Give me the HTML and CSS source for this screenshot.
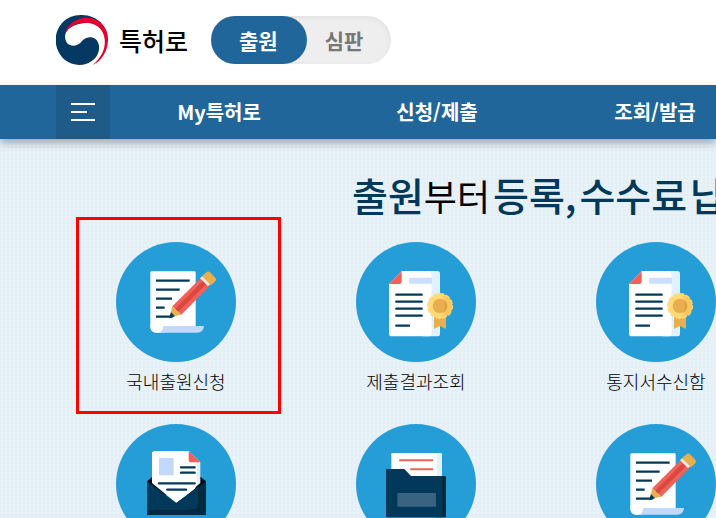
FILE: index.html
```html
<!DOCTYPE html>
<html lang="ko">
<head>
<meta charset="utf-8">
<meta name="viewport" content="width=device-width, initial-scale=1">
<title>특허로</title>
<link rel="stylesheet" href="styles.css">
</head>
<body>

<!-- shared drawings for the service icons -->
<svg class="defs" aria-hidden="true">
  <symbol id="icon-apply" viewBox="0 0 360 360">
    <path fill="#fff" d="M107 88h128q4 0 4 4v162h-70l-32 18h-14q-20 0-20-20V92q0-4 4-4z"/>
    <path fill="#c2d9fb" d="M137 252h127q-2 20-20 20H123q16-4 14-20z"/>
    <path fill="#fff" d="M103 245h39v7q-1 20-20 20t-19-20z"/>
    <path stroke="#023859" stroke-width="7" d="M120 116h101M120 143h71M120 170h48M120 197h26M120 224h50"/>
    <path fill="#f0615a" d="M169 193l86-86 26 25-85 86z"/>
    <path fill="#d8483f" d="M177 201l86-86 10 9-87 86z"/>
    <path fill="#e9af4e" d="M169 193l-8 32 35-7z"/>
    <path fill="#023859" d="M165 211l-6 18 18-6z"/>
    <path fill="#e8e8e8" d="M252 109l8-8 24 24-8 8z"/>
    <path fill="#e9af4e" d="M258 103l13-12q5-5 11 0l16 16q5 5 0 11l-13 12z"/>
  </symbol>
  <symbol id="icon-result" viewBox="0 0 360 360">
    <path fill="#def3ff" d="M200 87h44q8 0 8 8v180q0 8-8 8h-44z"/>
    <path fill="#fff" d="M137 87h80q10 1 10 11v174q0 11-10 11H107q-8 0-8-8V126z"/>
    <path fill="#f0615a" d="M137 87v31q0 8-7 8H99z"/>
    <path fill="#cbe0ff" d="M159 107h69v18h-69z"/>
    <path stroke="#023859" stroke-width="7" stroke-linecap="round" d="M121 158h76M121 179h76M121 200h76M121 221h76M121 251h38"/>
    <path fill="#e9af4e" d="M234 224h36v37l-18-9-18 9z"/>
    <circle cx="252" cy="192" r="35" fill="#ffda76"/>
    <circle cx="252" cy="192" r="35" fill="none" stroke="#ffda76" stroke-width="8" stroke-linecap="round" stroke-dasharray="9 9.32"/>
    <path fill="#fdc85b" d="M261 158q29 8 27 35t-32 33q20-29 5-68z"/>
    <circle cx="252" cy="192" r="22" fill="#e9af4e"/>
    <path fill="#dda142" d="M262 173q12 8 12 19t-12 20q10-19 0-39z"/>
  </symbol>
  <symbol id="icon-mail" viewBox="0 0 360 360">
    <path fill="#000d18" d="M93 172l16-14h144l17 14-30 40H110z"/>
    <path fill="#def3ff" d="M218 81l35 34v62l-70 60z"/>
    <path fill="#fff" d="M116 81h102l25 34v60q0 15-12 24l-50 38-73-60V89q0-8 8-8z"/>
    <path fill="#f0615a" d="M218 81l35 34h-27q-8 0-8-8z"/>
    <rect x="129" y="102" width="44" height="52" rx="3" fill="#c2d9fb"/>
    <path stroke="#023859" stroke-width="7" stroke-linecap="round" d="M195 130h41M195 146h41M129 178h107M154 197h56"/>
    <path fill="#002b3f" d="M270 172v98q0 3-4 3H97q-4 0-4-3l88-33z"/>
    <path fill="#023859" d="M93 172l88 65 65-48v54q0 12-12 12L110 272H97q-4 0-4-4z"/>
    <path fill="#002b3f" d="M93 258h143q10-3 10-13h24v25q0 3-4 3H97q-4 0-4-3z"/>
  </symbol>
  <symbol id="icon-folder" viewBox="0 0 360 360">
    <path fill="#def3ff" d="M230 87h24q4 0 4 4v80h-28z"/>
    <path fill="#fff" d="M110 87h133v84H106V91q0-4 4-4z"/>
    <path stroke="#f0615a" stroke-width="6" stroke-linecap="round" d="M132 109h97M165 136h64"/>
    <path fill="#002b3f" d="M240 156h26q4 0 4 4v116q0 4-4 4h-26z"/>
    <path fill="#023859" d="M94 135h51l20 21h93v124H94q-4 0-4-4V139q0-4 4-4z"/>
    <rect x="124" y="207" width="116" height="41" rx="3" fill="#3a6281"/>
  </symbol>
</svg>

<header class="header">
  <a class="logo" href="#">
    <svg class="logo-mark" viewBox="48 44 156 150" aria-hidden="true">
      <path fill="#053863" d="M184 68C156 38 96 34 66 68C35 104 44 154 76 180C100 198 134 198 155 182C174 170 180 149 176 132C171 108 144 104 128 120C116 136 102 140 88 133C77 127 75 115 75 103C82 74 130 62 184 68z"/>
      <path fill="#e5002f" d="M75 106C77 66 128 40 168 58C194 70 205 94 204 121C202 154 184 182 158 194C184 172 197 146 194 117C190 76 153 62 119 69C97 74 79 88 75 106z"/>
    </svg>
    <span class="logo-text">특허로</span>
  </a>
  <div class="switch">
    <button type="button" class="switch-btn active">출원</button>
    <button type="button" class="switch-btn">심판</button>
  </div>
</header>

<nav class="nav">
  <button type="button" class="menu-btn" aria-label="전체메뉴">
    <svg width="24" height="18" viewBox="0 0 24 18" aria-hidden="true">
      <path stroke="#fff" stroke-width="2" d="M0 1h24M0 9h16M0 17h24"/>
    </svg>
  </button>
  <a href="#">My특허로</a>
  <a href="#">신청/제출</a>
  <a href="#">조회/발급</a>
</nav>

<main class="main">
  <h1 class="title">
    <span><b>출원</b>부터</span>
    <b>등록,</b>
    <b>수수료</b>
    <b>납부</b>
  </h1>

  <div class="services">
    <a class="service selected" href="#">
      <svg class="service-icon" aria-hidden="true"><use href="#icon-apply"/></svg>
      <span>국내출원신청</span>
    </a>
    <a class="service" href="#">
      <svg class="service-icon" aria-hidden="true"><use href="#icon-result"/></svg>
      <span>제출결과조회</span>
    </a>
    <a class="service" href="#">
      <svg class="service-icon" aria-hidden="true"><use href="#icon-result"/></svg>
      <span>통지서수신함</span>
    </a>
    <a class="service" href="#" aria-label="메일">
      <svg class="service-icon" aria-hidden="true"><use href="#icon-mail"/></svg>
    </a>
    <a class="service" href="#" aria-label="보관함">
      <svg class="service-icon" aria-hidden="true"><use href="#icon-folder"/></svg>
    </a>
    <a class="service" href="#" aria-label="신청">
      <svg class="service-icon" aria-hidden="true"><use href="#icon-apply"/></svg>
    </a>
  </div>
</main>

</body>
</html>
```
FILE: styles.css
```css
* {
  box-sizing: border-box;
}

body {
  margin: 0;
  height: 100vh;
  display: flex;
  flex-direction: column;
  overflow: hidden;
  font-family: "Noto Sans CJK KR", "Noto Sans", sans-serif;
  color: #000;
  background: #fff;
}

a {
  color: inherit;
  text-decoration: none;
}

button {
  border: 0;
  padding: 0;
  font-family: inherit;
  cursor: pointer;
}

.defs {
  position: absolute;
  width: 0;
  height: 0;
}

/* Top bar */
.header {
  display: flex;
  flex: none;
  align-items: center;
  gap: 23px;
  padding: 15px 56px 20px;
}

.logo {
  display: flex;
  align-items: center;
  gap: 11px;
}

.logo-mark {
  width: 52px;
  height: 50px;
}

.logo-text {
  font-size: 25px;
  line-height: 50px;
  font-weight: 500;
}

.switch {
  display: flex;
  border-radius: 24px;
  background: #eee;
  box-shadow: inset 0 2px 6px rgba(0, 0, 0, 0.06);
}

.switch-btn {
  height: 48px;
  padding: 0 28px 0 18px;
  border-radius: 24px;
  background: none;
  color: #777;
  font-size: 21px;
  font-weight: 700;
}

.switch-btn.active {
  padding: 0 29px 0 28px;
  background: #20669a;
  color: #fff;
}

/* Main menu */
.nav {
  position: relative;
  display: flex;
  flex: none;
  height: 54px;
  padding-left: 56px;
  background: #20669a;
  box-shadow: 0 4px 8px rgba(0, 0, 0, 0.3);
}

.nav a {
  flex: 0 0 218px;
  color: #fff;
  font-size: 20px;
  font-weight: 700;
  line-height: 54px;
  text-align: center;
}

.menu-btn {
  display: flex;
  flex: none;
  align-items: center;
  justify-content: center;
  width: 54px;
  background: #1e5b89;
}

/* Services */
.main {
  flex: 1;
  min-height: 0;
  overflow: hidden;
  background: radial-gradient(#eaf3f9 1px, #e4eff6 1px) 0 0 / 4px 4px;
}

.title {
  display: flex;
  align-items: baseline;
  gap: 3px;
  margin: 0;
  padding: 26px 0 18px 352px;
  font-size: 36px;
  font-weight: 400;
  line-height: 58px;
  white-space: nowrap;
}

.title b {
  color: #023859;
  font-size: 39px;
  font-weight: 500;
}

.services {
  display: grid;
  grid-template-columns: repeat(3, 240px);
  grid-auto-rows: 152px;
  row-gap: 30px;
  padding-left: 56px;
}

.service {
  position: relative;
  display: flex;
  flex-direction: column;
  align-items: center;
  gap: 7px;
  font-size: 18px;
  font-weight: 300;
  line-height: 24px;
}

.service-icon {
  width: 120px;
  height: 120px;
  flex: none;
  border-radius: 50%;
  background: #259dd6;
}

/* Red frame around the chosen service */
.selected::after {
  content: "";
  position: absolute;
  inset: -25px 15px -20px 20px;
  border: 3px solid #f00;
}
```
